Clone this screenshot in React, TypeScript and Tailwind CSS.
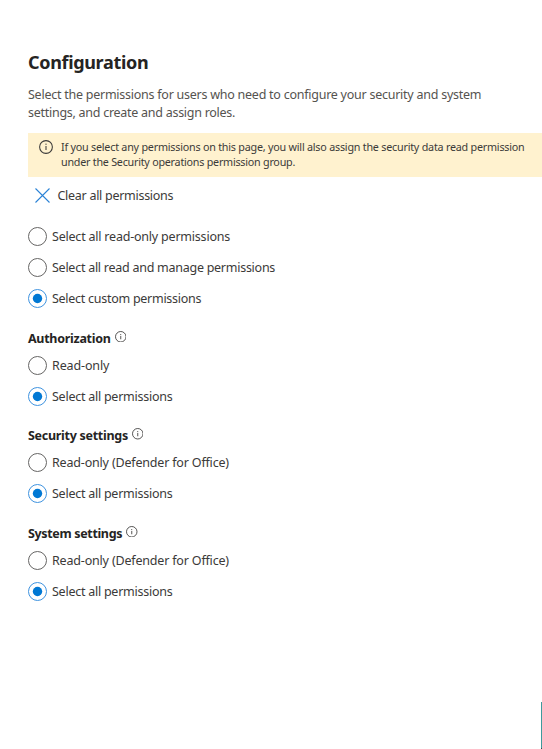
import React from "react";

function InfoIcon({ className }: { className: string }) {
  return (
    <svg viewBox="0 0 16 16" fill="none" className={className} aria-hidden="true">
      <circle cx="8" cy="8" r="7.3" stroke="currentColor" strokeWidth="1.2" />
      <path d="M8 6.8v4.7" stroke="currentColor" strokeWidth="1.2" />
      <circle cx="8" cy="4.8" r="0.75" fill="currentColor" />
    </svg>
  );
}

function Radio({ label, checked = false, spacing }: { label: string; checked?: boolean; spacing: string }) {
  return (
    <div role="radio" aria-checked={checked} className="flex h-[31.15px] items-center gap-[5px]">
      <svg viewBox="0 0 19 19" className="size-[19px] shrink-0" fill="none">
        <circle cx="9.5" cy="9.5" r="9" stroke={checked ? "#3f93df" : "#666564"} strokeWidth="1" />
        {checked && <circle cx="9.5" cy="9.5" r="4.7" fill="#0078d4" />}
      </svg>
      <span className={"whitespace-nowrap pt-px text-[12.5px] leading-[18px] text-[#3b3a39] " + spacing}>{label}</span>
    </div>
  );
}

function Section({ title, options, spacing }: { title: string; options: [string, string][]; spacing: string }) {
  return (
    <section className="h-[97.5px]">
      <h2 className="flex h-[26px] items-start gap-[4px]">
        <span className={"whitespace-nowrap text-[12.5px] font-bold leading-[29px] text-[#252423] " + spacing}>{title}</span>
        <InfoIcon className="mt-[7px] size-[11.5px] text-[#3b3a39]" />
      </h2>
      {options.map(([label, s], i) => (
        <Radio key={label} label={label} spacing={s} checked={i === 1} />
      ))}
    </section>
  );
}

export default function App() {
  return (
    <main className="flex h-[749px] w-[542px] overflow-hidden bg-white font-['Noto_Sans','Open_Sans',sans-serif]">
      <div className="flex w-[541px] flex-col pl-7">
        <h1 className="mt-[48px] h-7 whitespace-nowrap text-[18px] font-bold leading-7 tracking-[-0.33px] text-[#252423]">Configuration</h1>
        <p className="mt-[10px] whitespace-nowrap text-[12.5px] leading-[18px] text-[#55534f]">
          <span className="tracking-[-0.25px]">Select the permissions for users who need to configure your security and system</span>
          <br />
          <span className="tracking-[-0.27px]">settings, and create and assign roles.</span>
        </p>
        <div className="-mr-px mt-[11px] flex h-[43.5px] bg-[#fff2cf] pl-[11px] pt-[7px]">
          <InfoIcon className="size-[14px] shrink-0 text-[#3b3a39]" />
          <p className="ml-2 whitespace-nowrap text-[10.75px] leading-[15px] text-[#3b3a39]">
            <span className="tracking-[-0.22px]">If you select any permissions on this page, you will also assign the security data read permission</span>
            <br />
            <span className="tracking-[-0.24px]">under the Security operations permission group.</span>
          </p>
        </div>
        <button className="mt-[0.5px] flex h-9 w-fit items-center gap-[7.5px] pl-[7px]">
          <svg viewBox="0 0 15 15" className="size-[15px]" fill="none" stroke="#2b83d6" strokeWidth="1.1">
            <path d="M.5.5l14 14M14.5.5l-14 14" />
          </svg>
          <span className="whitespace-nowrap pt-px text-[12.5px] leading-[18px] tracking-[-0.28px] text-[#3b3a39]">Clear all permissions</span>
        </button>
        <div className="mt-[8px]" role="radiogroup">
          <Radio label="Select all read-only permissions" spacing="tracking-[-0.21px]" />
          <Radio label="Select all read and manage permissions" spacing="tracking-[-0.26px]" />
          <Radio label="Select custom permissions" spacing="tracking-[-0.27px]" checked />
        </div>
        <div className="mt-[9.3px]">
          <Section title="Authorization" spacing="tracking-[-0.28px]" options={[["Read-only", "tracking-[-0.13px]"], ["Select all permissions", "tracking-[-0.25px]"]]} />
          <Section title="Security settings" spacing="tracking-[-0.28px]" options={[["Read-only (Defender for Office)", "tracking-[-0.18px]"], ["Select all permissions", "tracking-[-0.25px]"]]} />
          <Section title="System settings" spacing="tracking-[-0.34px]" options={[["Read-only (Defender for Office)", "tracking-[-0.18px]"], ["Select all permissions", "tracking-[-0.25px]"]]} />
        </div>
      </div>
      <div className="h-[47px] w-px self-end border-b border-[#33474a] bg-[#3f9a9c]" />
    </main>
  );
}
